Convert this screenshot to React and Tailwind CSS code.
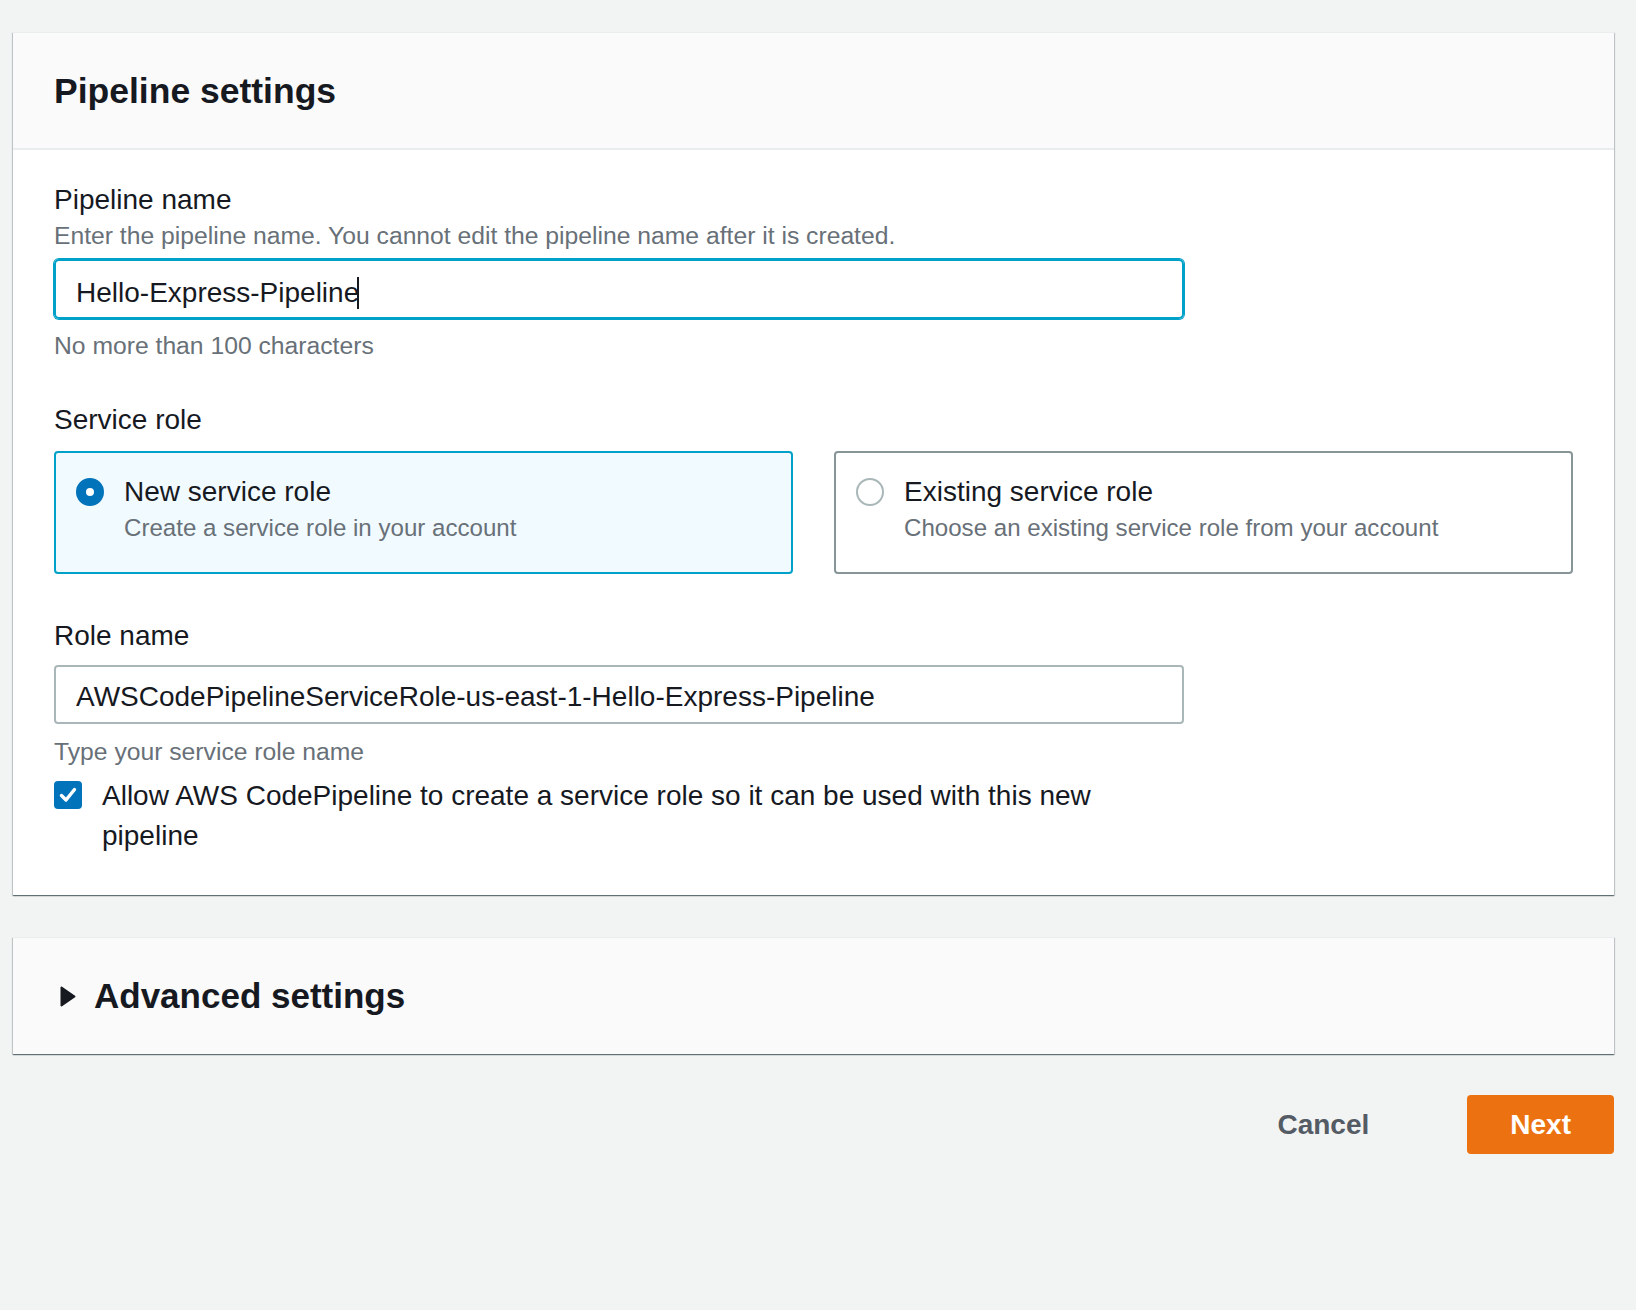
import { useState } from 'react'

const FONT = { fontFamily: '"Liberation Sans", Arial, sans-serif' }

function Radio({ checked }) {
  return checked ? (
    <span className="mt-[6px] h-[28px] w-[28px] shrink-0 rounded-full border-[10px] border-[#0073bb] bg-white" />
  ) : (
    <span className="mt-[6px] h-[28px] w-[28px] shrink-0 rounded-full border-2 border-[#aab7b8] bg-white" />
  )
}

function RoleTile({ title, desc, checked }) {
  return (
    <div
      className={`flex gap-[20px] rounded-[4px] border-2 pl-[20px] pr-[20px] pt-[19px] pb-[28px] ${
        checked ? 'border-[#00a1c9] bg-[#f1faff]' : 'border-[#879596] bg-white'
      }`}
    >
      <Radio checked={checked} />
      <div className="flex flex-col">
        <span className="text-[28px] leading-[40px] text-[#16191f]">{title}</span>
        <span className="text-[24.1px] leading-[32px] text-[#687078]">{desc}</span>
      </div>
    </div>
  )
}

export default function App() {
  const [role] = useState('new')

  return (
    <div className="min-h-[1310px] w-full bg-[#f2f3f3] pl-[13px] pt-[32px]" style={FONT}>
      <div className="w-[1601px]">

        {/* Pipeline settings panel */}
        <div className="border-t border-[#eaeded] bg-white shadow-[0_1px_1px_0_rgba(0,28,36,0.45),1px_1px_1px_0_rgba(0,28,36,0.15),-1px_1px_1px_0_rgba(0,28,36,0.15)]">
          <div className="flex h-[117px] items-center border-b-2 border-[#eaeded] bg-[#fafafa] px-[41px]">
            <h2 className="text-[35.5px] font-bold leading-[44px] text-[#16191f]">Pipeline settings</h2>
          </div>

          <div className="px-[41px] pt-[30px] pb-[39px]">
            <p className="text-[28px] leading-[40px] text-[#16191f]">Pipeline name</p>
            <p className="text-[24.7px] leading-[32px] text-[#687078]">
              Enter the pipeline name. You cannot edit the pipeline name after it is created.
            </p>
            <div className="mt-[7px] flex h-[60px] w-[1130px] items-center rounded-[5px] border-2 border-[#00a1c9] pl-[20px] pt-[7px] shadow-[0_0_0_1px_#00a1c9]">
              <span className="text-[28px] leading-[40px] text-[#16191f]">Hello-Express-Pipeline</span>
              <span className="-ml-[2px] h-[32px] w-[2px] bg-[#16191f]" />
            </div>
            <p className="mt-[11px] text-[24.7px] leading-[32px] text-[#687078]">No more than 100 characters</p>

            <p className="mt-[38px] text-[28px] leading-[40px] text-[#16191f]">Service role</p>
            <div className="mt-[11px] grid grid-cols-2 gap-[41px]">
              <RoleTile checked={role === 'new'} title="New service role" desc="Create a service role in your account" />
              <RoleTile checked={role === 'existing'} title="Existing service role" desc="Choose an existing service role from your account" />
            </div>

            <p className="mt-[42px] text-[28px] leading-[40px] text-[#16191f]">Role name</p>
            <div className="mt-[9px] flex h-[59px] w-[1130px] items-center rounded-[4px] border-2 border-[#aab7b8] bg-white pl-[20px] pt-[4px]">
              <span className="text-[28px] leading-[40px] text-[#16191f]">AWSCodePipelineServiceRole-us-east-1-Hello-Express-Pipeline</span>
            </div>
            <p className="mt-[12px] text-[24.7px] leading-[32px] text-[#687078]">Type your service role name</p>

            <div className="mt-[8px] flex w-[1130px] gap-[20px]">
              <span className="mt-[5px] flex h-[28px] w-[28px] shrink-0 items-center justify-center rounded-[4px] bg-[#0073bb]">
                <svg width="20" height="20" viewBox="0 0 20 20" fill="none">
                  <polyline points="3.5,10.5 8,15 16.5,4.5" stroke="white" strokeWidth="3.4" strokeLinecap="round" strokeLinejoin="round" />
                </svg>
              </span>
              <p className="text-[28px] leading-[40px] text-[#16191f]">
                Allow AWS CodePipeline to create a service role so it can be used with this new
                <br />
                pipeline
              </p>
            </div>
          </div>
        </div>

        {/* Advanced settings panel */}
        <div className="mt-[42px] flex h-[117px] items-center gap-[18px] border-t border-[#eaeded] bg-[#fafafa] pl-[47px] shadow-[0_1px_1px_0_rgba(0,28,36,0.45),1px_1px_1px_0_rgba(0,28,36,0.15),-1px_1px_1px_0_rgba(0,28,36,0.15)]">
          <svg width="16" height="21" viewBox="0 0 16 21">
            <path d="M1.5 1.5 L14.5 10.5 L1.5 19.5 Z" fill="#16191f" stroke="#16191f" strokeWidth="2" strokeLinejoin="round" />
          </svg>
          <h2 className="text-[35px] font-bold leading-[44px] text-[#16191f]">Advanced settings</h2>
        </div>

        {/* Actions */}
        <div className="mt-[41px] flex items-center justify-end gap-[98px]">
          <button className="text-[28px] font-bold leading-[40px] text-[#545b64]">Cancel</button>
          <button className="h-[59px] rounded-[4px] bg-[#ec7211] px-[43px] text-[28px] font-bold text-white">Next</button>
        </div>
      </div>
    </div>
  )
}
